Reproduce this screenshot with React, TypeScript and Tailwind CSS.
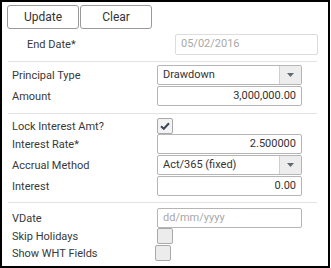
const Caret = () => (
  <svg width="7" height="4" viewBox="0 0 7 4">
    <path d="M0 0 L7 0 L3.5 4 Z" fill="#5f6873" />
  </svg>
);

const Check = () => (
  <svg width="10" height="8" viewBox="0 0 10 8">
    <path d="M1 4.2 L3.8 6.8 L9 1.2" fill="none" stroke="#3a4757" strokeWidth="2" />
  </svg>
);

const Sep = ({ mt }: { mt: string }) => (
  <div className={`${mt} ml-[6px] h-px w-[309px] bg-[#e2e2e2]`} />
);

const Label = ({ children }: { children: React.ReactNode }) => (
  <div className="w-[155px] shrink-0 pl-[10px] leading-none">{children}</div>
);

const TextBox = ({ value, right, placeholder }: { value?: string; right?: boolean; placeholder?: string }) => (
  <div
    className={`flex h-[20px] w-[145px] items-center rounded-[2px] border border-[#b5b5b5] bg-white px-[5px] ${
      right ? "justify-end" : "justify-start"
    }`}
  >
    {value ? <span className="text-[#333]">{value}</span> : <span className="text-[#a8a8a8]">{placeholder}</span>}
  </div>
);

const Select = ({ value }: { value: string }) => (
  <div className="flex h-[20px] w-[145px] items-stretch rounded-[2px] border border-[#b5b5b5] bg-white">
    <div className="flex flex-1 items-center px-[5px] text-[#333]">{value}</div>
    <div className="flex w-[22px] items-center justify-center border-l border-[#cfcfcf] bg-[#ededed]">
      <Caret />
    </div>
  </div>
);

const CheckBox = ({ checked, className = "" }: { checked?: boolean; className?: string }) => (
  <div
    className={`flex h-[16px] w-[16px] items-center justify-center rounded-[2px] border border-[#a9a9a9] ${
      checked ? "bg-[#f3f3f3]" : "bg-[#ececec]"
    } ${className}`}
  >
    {checked && <Check />}
  </div>
);

export default function App() {
  return (
    <div className="h-[268px] w-[330px] overflow-hidden border-2 border-black bg-white font-['Roboto',sans-serif] text-[11px] text-[#383838]">
      <div className="ml-[5px] mt-[3px] flex gap-[1px]">
        <button className="h-[24px] w-[72px] rounded-[3px] border border-[#9a9a9a] bg-white text-[12px] text-[#333]">
          Update
        </button>
        <button className="h-[24px] w-[72px] rounded-[3px] border border-[#9a9a9a] bg-white text-[12px] text-[#333]">
          Clear
        </button>
      </div>

      <div className="mt-[5px] flex h-[21px] items-center">
        <div className="w-[173px] shrink-0 pl-[25px] leading-none">End Date*</div>
        <div className="flex h-[21px] w-[143px] items-center rounded-[2px] border border-[#dcdcdc] px-[5px] text-[#a8a8a8]">
          05/02/2016
        </div>
      </div>

      <Sep mt="mt-[6px]" />

      <div className="mt-[3px] flex h-[20px] items-center">
        <Label>Principal Type</Label>
        <Select value="Drawdown" />
      </div>
      <div className="mt-[1px] flex h-[20px] items-center">
        <Label>Amount</Label>
        <TextBox value="3,000,000.00" right />
      </div>

      <Sep mt="mt-[7px]" />

      <div className="mt-[4px] flex h-[16px] items-center">
        <Label>Lock Interest Amt?</Label>
        <CheckBox checked />
      </div>
      <div className="flex h-[20px] items-center">
        <Label>Interest Rate*</Label>
        <TextBox value="2.500000" right />
      </div>
      <div className="mt-[1px] flex h-[20px] items-center">
        <Label>Accrual Method</Label>
        <Select value="Act/365 (fixed)" />
      </div>
      <div className="mt-[1px] flex h-[20px] items-center">
        <Label>Interest</Label>
        <TextBox value="0.00" right />
      </div>

      <Sep mt="mt-[6px]" />

      <div className="mt-[5px] flex h-[20px] items-center">
        <Label>VDate</Label>
        <TextBox placeholder="dd/mm/yyyy" />
      </div>
      <div className="flex h-[16px] items-center">
        <Label>Skip Holidays</Label>
        <CheckBox />
      </div>
      <div className="mt-[1px] flex h-[16px] items-center">
        <Label>Show WHT Fields</Label>
        <CheckBox className="-ml-[2px]" />
      </div>
    </div>
  );
}
